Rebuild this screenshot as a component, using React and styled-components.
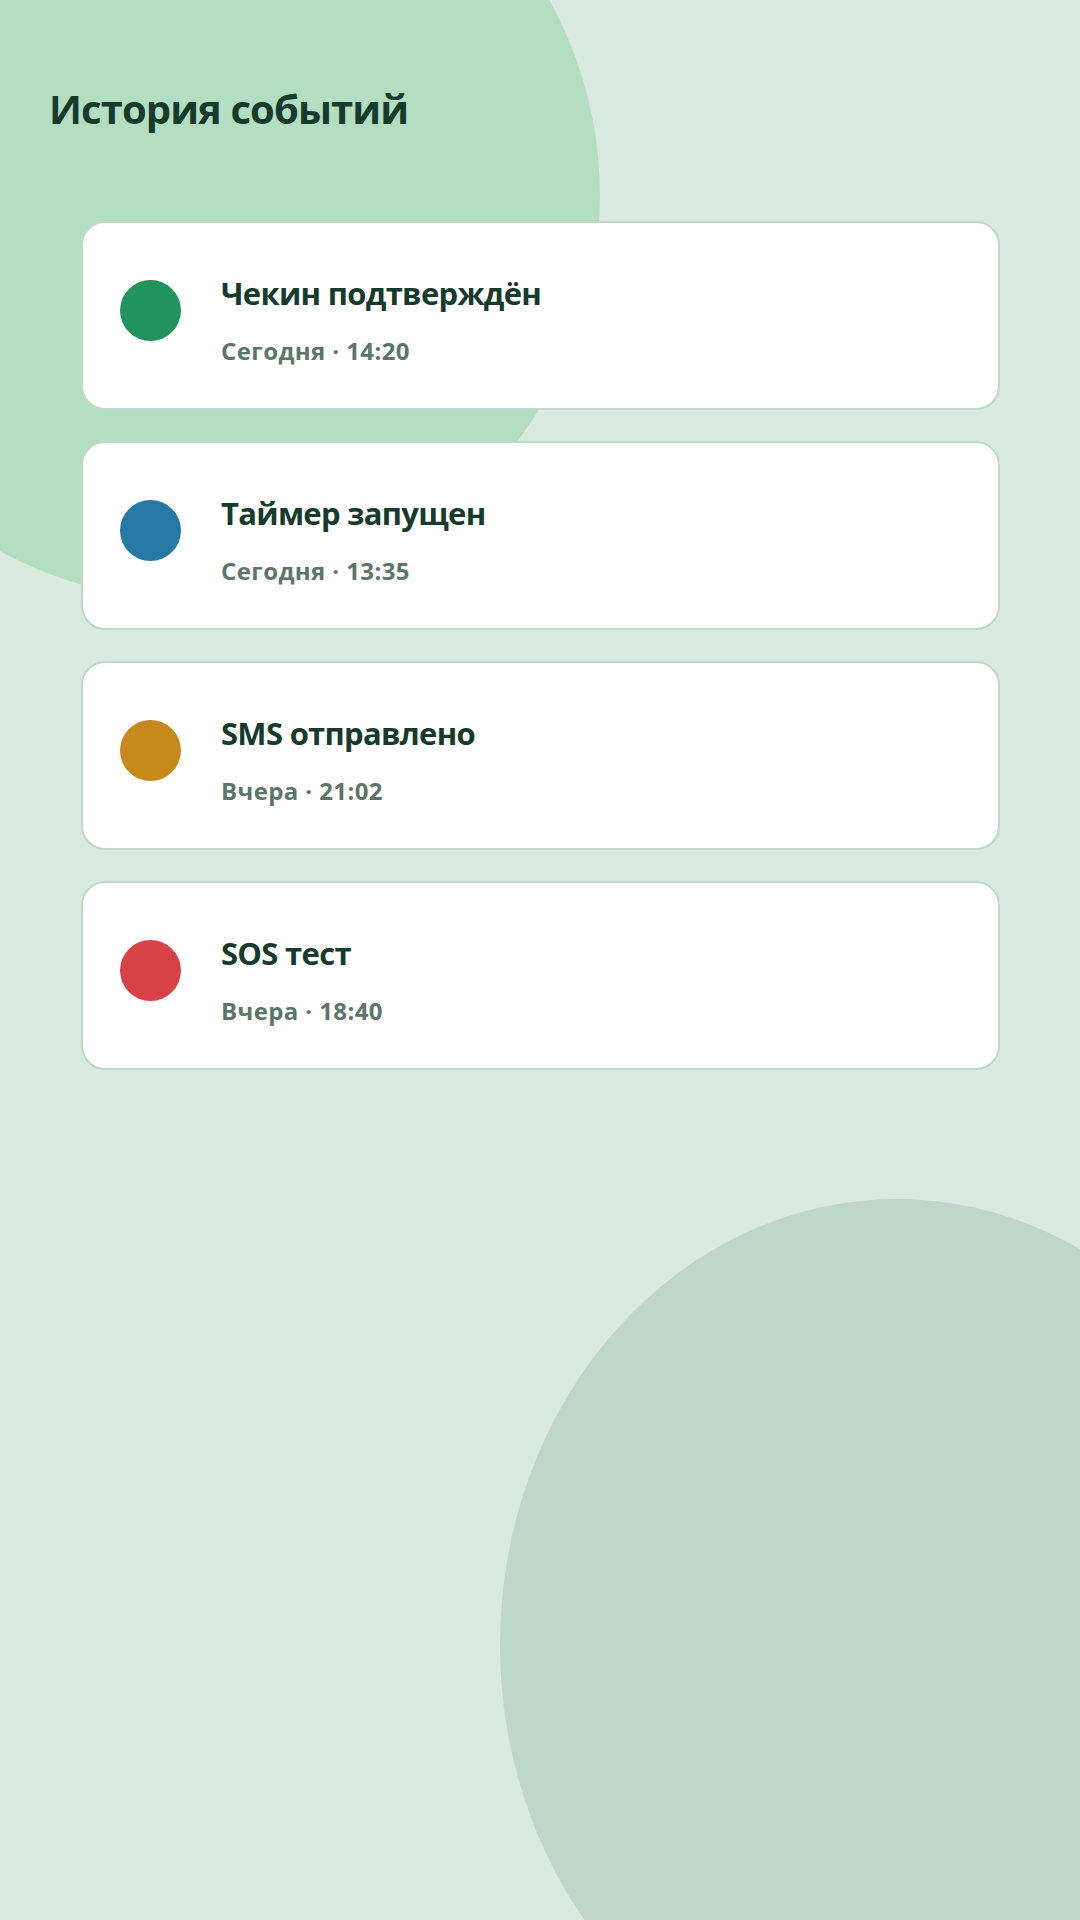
import styled, { createGlobalStyle } from "styled-components";

const GlobalStyle = createGlobalStyle`
  * { box-sizing: border-box; }
  html, body {
    margin: 0;
    padding: 0;
    background: #d9e9df;
    font-family: "Open Sans", "Noto Sans", "Liberation Sans", sans-serif;
  }
`;

const Screen = styled.div`
  position: relative;
  width: 1080px;
  height: 1920px;
  overflow: hidden;
  background: #d9e9df;
`;

const Blob = styled.div`
  position: absolute;
  border-radius: 50%;
  z-index: 0;
`;

const TopBlob = styled(Blob)`
  left: -210px;
  top: -209px;
  width: 810px;
  height: 810px;
  background: #b4dec1;
`;

const BottomBlob = styled(Blob)`
  left: 500px;
  top: 1199px;
  width: 794px;
  height: 892px;
  background: #bed7c9;
`;

const Content = styled.div`
  position: relative;
  z-index: 1;
  padding: 85px 80px 0 49px;
`;

const Title = styled.h1`
  margin: 0;
  font-size: 40px;
  line-height: 48px;
  font-weight: 700;
  letter-spacing: -0.9px;
  color: #163a2c;
`;

const List = styled.div`
  display: flex;
  flex-direction: column;
  gap: 31px;
  margin: 88px 0 0 32px;
`;

const Card = styled.div`
  display: flex;
  align-items: flex-start;
  gap: 40px;
  height: 189px;
  padding: 51px 36px 0 37px;
  background: #ffffff;
  border: 2px solid #c0d8ca;
  border-radius: 24px;
`;

const Dot = styled.div`
  flex: 0 0 61px;
  width: 61px;
  height: 61px;
  margin-top: 6px;
  border-radius: 50%;
  background: ${(p) => p.color};
`;

const Info = styled.div`
  display: flex;
  flex-direction: column;
`;

const EventName = styled.div`
  font-size: 31px;
  line-height: 38px;
  font-weight: 700;
  letter-spacing: -0.7px;
  color: #163a2c;
`;

const EventTime = styled.div`
  margin-top: 24px;
  font-size: 24px;
  line-height: 29px;
  font-weight: 700;
  letter-spacing: 0.4px;
  color: #5c7568;
`;

const events = [
  { name: "Чекин подтверждён", time: "Сегодня · 14:20", color: "#22935e" },
  { name: "Таймер запущен", time: "Сегодня · 13:35", color: "#2878a6" },
  { name: "SMS отправлено", time: "Вчера · 21:02", color: "#c7891b" },
  { name: "SOS тест", time: "Вчера · 18:40", color: "#d64245" },
];

const App = () => {
  return (
    <Screen>
      <GlobalStyle />
      <TopBlob />
      <BottomBlob />
      <Content>
        <Title>История событий</Title>
        <List>
          {events.map((e) => (
            <Card key={e.name}>
              <Dot color={e.color} />
              <Info>
                <EventName>{e.name}</EventName>
                <EventTime>{e.time}</EventTime>
              </Info>
            </Card>
          ))}
        </List>
      </Content>
    </Screen>
  );
};

export default App;
